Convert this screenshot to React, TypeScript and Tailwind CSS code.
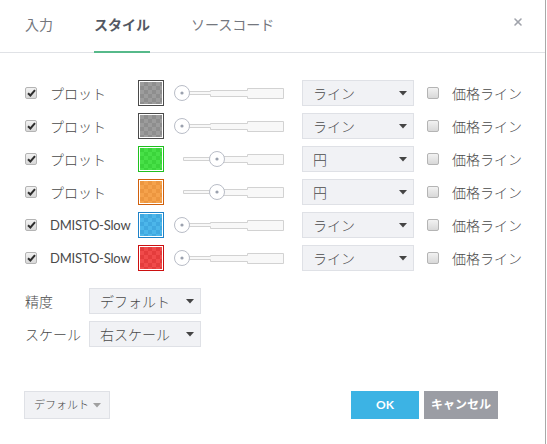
import { X } from "lucide-react";

const rows = [
  { label: "プロット", border: "#4a4a4a", fill: "#8e8e8e", alt: "#9c9c9c", knob: 10, type: "ライン" },
  { label: "プロット", border: "#4a4a4a", fill: "#8e8e8e", alt: "#9c9c9c", knob: 10, type: "ライン" },
  { label: "プロット", border: "#1fc01f", fill: "#47e047", alt: "#3bd43b", knob: 45, type: "円" },
  { label: "プロット", border: "#d0600c", fill: "#f5a24c", alt: "#ec9640", knob: 45, type: "円" },
  { label: "DMISTO-Slow", border: "#1e82c8", fill: "#4cb6ea", alt: "#40a8e0", knob: 10, type: "ライン" },
  { label: "DMISTO-Slow", border: "#cc1010", fill: "#f04a4a", alt: "#e43c3c", knob: 10, type: "ライン" },
];

function Check({ on }: { on: boolean }) {
  return (
    <span className="flex h-[12px] w-[12px] shrink-0 items-center justify-center rounded-[2px] border border-[#b4b4b4] bg-gradient-to-b from-[#f2f2f2] to-[#d8d8d8]">
      {on && (
        <svg width="9" height="8" viewBox="0 0 9 8">
          <path d="M1 4.2 L3.4 6.5 L8 1.2" stroke="#2e2e2e" strokeWidth="2" fill="none" />
        </svg>
      )}
    </span>
  );
}

function Caret({ color = "#444" }: { color?: string }) {
  return (
    <svg width="8" height="5" viewBox="0 0 8 5" className="shrink-0">
      <path d="M0 0 H8 L4 4.5 Z" fill={color} />
    </svg>
  );
}

function Swatch({ border, fill, alt, id }: { border: string; fill: string; alt: string; id: string }) {
  return (
    <div className="h-[26px] w-[26px] shrink-0 border bg-white p-[1px]" style={{ borderColor: border }}>
      <svg width="22" height="22">
        <defs>
          <pattern id={id} width="8" height="8" patternUnits="userSpaceOnUse">
            <rect width="8" height="8" fill={fill} />
            <rect width="4" height="4" fill={alt} />
            <rect x="4" y="4" width="4" height="4" fill={alt} />
          </pattern>
        </defs>
        <rect width="22" height="22" fill={`url(#${id})`} />
      </svg>
    </div>
  );
}

function Slider({ knob }: { knob: number }) {
  return (
    <svg width="114" height="26" viewBox="0 0 114 26" className="ml-[8px] shrink-0">
      <path
        d="M11.5 11.5 H38.5 V10.5 H75.5 V8.5 H111.5 V18.5 H75.5 V16.5 H38.5 V14.5 H11.5 Z"
        fill="#f8f8f8"
        stroke="#d2d2d2"
      />
      <circle cx={knob} cy="13" r="7.5" fill="#fff" stroke="#b9bdc7" />
      <circle cx={knob} cy="13" r="1.6" fill="#9ba1ae" />
    </svg>
  );
}

function Select({ value }: { value: string }) {
  return (
    <div className="flex h-[26px] w-[112px] shrink-0 items-center justify-between border border-[#dfe1e6] bg-[#f1f2f5] pl-[10px] pr-[6px] text-[14px] whitespace-nowrap text-[#4a4a4a]">
      <span>{value}</span>
      <Caret />
    </div>
  );
}

export default function App() {
  return (
    <div
      className="h-[444px] w-[546px] border-r border-[#a9a9a9] bg-white font-light text-[#4a4a4a]"
      style={{ fontFamily: "Lato, 'Noto Sans CJK JP', sans-serif" }}
    >
      <div className="flex h-[53px] items-stretch border-b border-[#e0e2e6]">
        <div className="ml-[25px] flex items-center border-b-2 border-transparent pb-[2px] text-[14px] font-normal text-[#74777e]">入力</div>
        <div className="ml-[41px] -mb-px flex items-center border-b-2 border-[#56b98a] pb-[2px] text-[14px] font-bold text-[#535863]">スタイル</div>
        <div className="ml-[41px] flex items-center border-b-2 border-transparent pb-[2px] text-[14px] font-normal text-[#74777e]">ソースコード</div>
        <div className="ml-auto mr-[21px] flex items-center pb-[8px] text-[#a0a3ab]">
          <X size={12} strokeWidth={3.2} />
        </div>
      </div>

      <div className="flex flex-col gap-[7px] pt-[27px]">
        {rows.map((r, i) => (
          <div key={i} className="flex h-[26px] items-center pl-[25px] whitespace-nowrap">
            <Check on />
            <span className="ml-[13px] w-[88px] shrink-0 text-[14px]">
              {r.label.startsWith("D") ? <span className="text-[13px] font-normal tracking-[-0.2px]">{r.label}</span> : r.label}
            </span>
            <Swatch border={r.border} fill={r.fill} alt={r.alt} id={`chk${i}`} />
            <Slider knob={r.knob} />
            <div className="ml-[16px] shrink-0">
              <Select value={r.type} />
            </div>
            <div className="ml-[13px] shrink-0">
              <Check on={false} />
            </div>
            <span className="ml-[13px] text-[14px]">価格ライン</span>
          </div>
        ))}
      </div>

      <div className="mt-[17px] flex flex-col gap-[7px] pl-[25px]">
        <div className="flex items-center">
          <span className="w-[64px] shrink-0 text-[14px]">精度</span>
          <Select value="デフォルト" />
        </div>
        <div className="flex items-center">
          <span className="w-[64px] shrink-0 text-[14px]">スケール</span>
          <Select value="右スケール" />
        </div>
      </div>

      <div className="mt-[44px] flex items-center pl-[24px] pr-[47px]">
        <div className="flex h-[28px] w-[86px] shrink-0 items-center justify-between border border-[#dfe1e6] bg-[#f1f2f5] pl-[9px] pr-[8px] text-[11px] whitespace-nowrap text-[#444]">
          <span>デフォルト</span>
          <Caret color="#a0a0a0" />
        </div>
        <button className="ml-auto h-[28px] w-[68px] bg-[#3cb3e4] text-[12px] font-bold text-white">OK</button>
        <button className="ml-[5px] h-[28px] w-[74px] bg-[#9b9da4] text-[12px] font-bold whitespace-nowrap text-white">キャンセル</button>
      </div>
    </div>
  );
}
